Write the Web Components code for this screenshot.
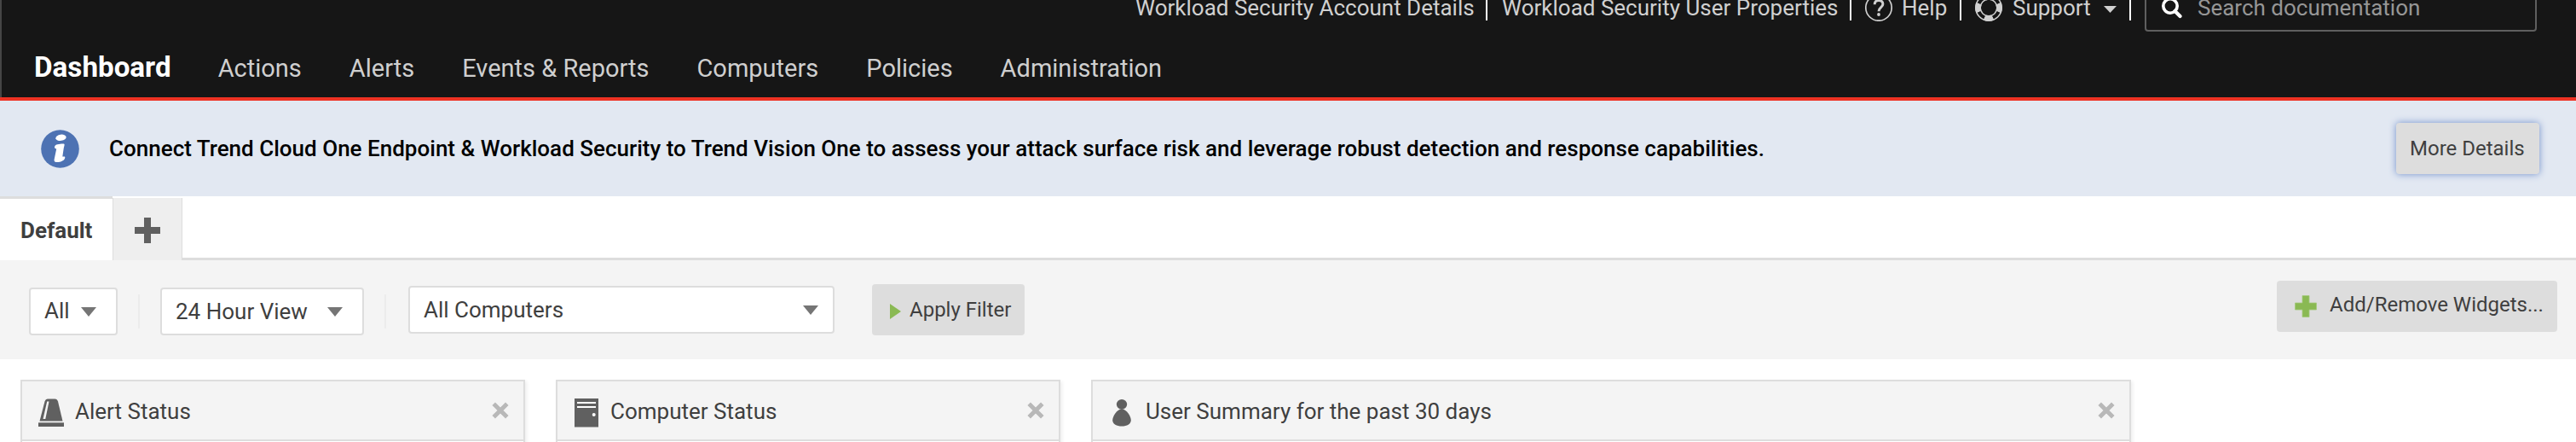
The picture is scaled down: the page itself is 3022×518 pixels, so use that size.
<!DOCTYPE html>
<html lang="en">
<head>
<meta charset="utf-8">
<title>Workload Security</title>
<style>
html, body { margin: 0; }
body { width: 3022px; height: 518px; overflow: hidden; background: #fff; color: #3f3f3f; font-family: Roboto, "Liberation Sans", sans-serif; font-size: 26px; white-space: nowrap; }
</style>
</head>
<body>
<ws-app></ws-app>
<script>
const define = (name, html) => {
  const template = document.createElement('template');
  template.innerHTML = html;
  customElements.define(name, class extends HTMLElement {
    constructor() {
      super();
      this.attachShadow({ mode: 'open' }).append(template.content.cloneNode(true));
    }
  });
};

/* Icons */
const iconMarkup = {
  help: '<svg width="32" height="32" viewBox="0 0 32 32" fill="none" stroke="#d0d0d0"><circle cx="16" cy="16" r="15.2" stroke-width="1.7"/><path d="M11.2 12.2C11.2 9 13 7.6 16 7.6s4.9 1.600 4.900 4.200c0 3.900-4.900 3.700-4.900 8.400" stroke-width="3"/><circle cx="16" cy="24" r="1.900" fill="#d0d0d0" stroke="none"/></svg>',
  support: '<svg width="32" height="32" viewBox="0 0 32 32" fill="none" stroke="#d0d0d0"><circle cx="16" cy="16" r="15.2" stroke-width="1.600"/><circle cx="16" cy="16" r="9.800" stroke-width="1.500"/><path d="M10.600 3.500A13.500 13.500 0 0 1 21.400 3.500M28.500 10.600A13.500 13.500 0 0 1 28.500 21.400M21.400 28.500A13.500 13.500 0 0 1 10.600 28.500M3.500 21.400A13.500 13.500 0 0 1 3.500 10.600" stroke-width="4.500"/><path d="M12 5.800A11 11 0 0 1 20 5.800M26.200 12A11 11 0 0 1 26.200 20M20 26.200A11 11 0 0 1 12 26.200M5.800 20A11 11 0 0 1 5.800 12" stroke-width="3.500"/></svg>',
  search: '<svg width="24" height="26" viewBox="0 0 24 26" fill="none" stroke="#fff"><circle cx="10" cy="11" r="8.200" stroke-width="3.600"/><path d="M15.500 17l6 6" stroke-width="4.200" stroke-linecap="round"/></svg>',
  info: '<svg width="45" height="45" viewBox="0 0 45 45"><circle cx="22.500" cy="22.500" r="22.300" fill="#4d72b3"/><ellipse cx="23.500" cy="9.300" rx="6.200" ry="3.600" transform="rotate(-8 23.500 9.300)" fill="#fff"/><path d="M16 20.500c.4-2.300 1.500-2.800 3.500-3.200 3-.7 7.500-1.200 8-.3.500.8-.5 3-.8 5L25.300 31.500h2.600c1 .4.1 2.800-1 4-2 1.700-5.500 2.700-9 2.600-1.900-.2-2.500-1.200-2.300-3l2.600-12.600c-1.300-.3-2.300-.8-2.200-2z" fill="#fff"/></svg>',
  plus: '<svg width="30" height="30" viewBox="0 0 30 30"><path d="M11 0h8v11h11v8H19v11h-8V19H0v-8h11z" fill="#606060"/></svg>',
  add: '<svg width="26" height="26" viewBox="0 0 26 26"><path d="M9 .5h8V9h8.500v8H17v8.500H9V17H.5V9H9z" fill="#8ab953" stroke="#a3c97c" stroke-width=".8"/></svg>',
  caret: '<svg width="18" height="11" viewBox="0 0 18 11"><path d="M0 0h18L9 11z" fill="#757575"/></svg>',
  caretlight: '<svg width="15" height="8" viewBox="0 0 15 8"><path d="M0 0h15L7.500 8z" fill="#d0d0d0"/></svg>',
  play: '<svg width="13" height="18" viewBox="0 0 13 18"><path d="M0 0l13 9L0 18z" fill="#8ab953"/></svg>',
  close: '<svg width="20" height="20" viewBox="0 0 20 20"><path d="M2.200 2.200l15.600 15.600M17.800 2.200L2.200 17.800" stroke="#b8b8b8" stroke-width="5"/></svg>',
  alert: '<svg width="32" height="34" viewBox="0 0 32 34"><path d="M7.500 3.500Q8.500.5 11 .5h8.500Q22 .5 23 3.500l5.500 23h-27z" fill="#606060"/><path d="M10.200 3.500h2.300L8.300 24H5.500z" fill="#f4f4f4"/><path d="M0 28.300h30V33H0z" fill="#606060"/></svg>',
  computer: '<svg width="28" height="34" viewBox="0 0 28 34"><path d="M0 0h28v33.500H0z" fill="#606060"/><path d="M3 4h22v2H3zM3 9h22v2H3z" fill="#fff"/><circle cx="22.700" cy="19" r="2" fill="#fff"/></svg>',
  user: '<svg width="22" height="32" viewBox="0 0 22 32"><ellipse cx="11" cy="5.800" rx="6.200" ry="5.800" fill="#606060"/><path d="M11 11C17 12 21.800 20 21.800 24.500 21.800 29 17 31.500 11 31.500S.2 29 .2 24.500C.2 20 5 12 11 11z" fill="#606060"/></svg>'
};
customElements.define('ws-icon', class extends HTMLElement {
  constructor() {
    super();
    this.attachShadow({ mode: 'open' });
  }
  connectedCallback() {
    this.shadowRoot.innerHTML = '<style>:host{display:block;flex:none}svg{display:block}</style>' + iconMarkup[this.getAttribute('name')];
  }
});

define('ws-header', `<style>
:host { display: block; box-sizing: border-box; height: 118px; overflow: hidden; background: #161616; border-bottom: 4px solid #ee3223; color: #d0d0d0; box-shadow: inset 2px 0 #454545; }
.top { display: flex; align-items: center; height: 56px; margin: -19px 46px 0 0; justify-content: flex-end; line-height: 32px; }
i { width: 2px; height: 30px; background: #fff; flex: none; }
.account { width: 396px; margin-right: 15px; }
.user { width: 393px; margin: 0 15px 0 17px; }
.help { width: 53px; margin: 0 15px 0 11px; }
.support { width: 92px; margin: 0 15px 0 12px; }
.h { margin-left: 16px; } .s { margin-left: 16px; }
.caret { margin: 3px 15px 0 0; }
.search { box-sizing: border-box; display: flex; align-items: center; width: 460px; height: 56px; margin-left: 16px; padding-left: 18px; border: 2px solid #5f5f5f; border-radius: 4px; color: #969696; }
.search span { margin-left: 18px; }
nav { display: flex; align-items: baseline; gap: 56px; padding: 3px 0 0 40px; height: 74px; line-height: 77px; font-size: 29px; color: #cfcfcf; }
b { font-size: 33.2px; color: #fff; margin-right: -1px; }
</style>
<div class="top">
<span class="account">Workload Security Account Details</span><i></i>
<span class="user">Workload Security User Properties</span><i></i>
<ws-icon class="h" name="help"></ws-icon><span class="help">Help</span><i></i>
<ws-icon class="s" name="support"></ws-icon><span class="support">Support</span><ws-icon class="caret" name="caretlight"></ws-icon><i></i>
<div class="search"><ws-icon name="search"></ws-icon><span>Search documentation</span></div>
</div>
<nav><b>Dashboard</b><span>Actions</span><span>Alerts</span><span>Events &amp; Reports</span><span>Computers</span><span>Policies</span><span>Administration</span></nav>`);

define('ws-button', `<style>
:host { display: flex; box-sizing: border-box; align-items: center; height: 60px; background: #ddd; border-radius: 4px; font-size: 24px; line-height: 30px; color: #3f3f3f; flex: none; }
</style><slot></slot>`);

define('ws-banner', `<style>
:host { display: flex; box-sizing: border-box; height: 112px; align-items: center; padding: 0 43px 0 48px; background: #e2e8f2; color: #000; font-weight: 500; }
.text { margin-left: 35px; flex: 1; line-height: 32px; letter-spacing: .01px; }
ws-button { width: 168px; padding-left: 16px; font-weight: 400; letter-spacing: 0; box-shadow: 0 0 8px #7391cb; }
</style><ws-icon name="info"></ws-icon><span class="text"><slot></slot></span><ws-button>More Details</ws-button>`);

define('ws-tabs', `<style>
:host { display: flex; height: 75px; }
.tab { box-sizing: border-box; width: 132px; border-top: 3px solid #ddd; padding: 22px 0 0 24px; line-height: 30px; font-weight: 700; }
.new { box-sizing: border-box; width: 82px; margin-top: 2px; border: solid #ddd; border-width: 0 1px; background: #eee; display: flex; padding: 23px 0 0 25px; }
.rest { flex: 1; border-bottom: 3px solid #ddd; }
</style><div class="tab">Default</div><div class="new"><ws-icon name="plus"></ws-icon></div><div class="rest"></div>`);

define('ws-select', `<style>
:host { display: flex; box-sizing: border-box; align-items: center; justify-content: space-between; height: 56px; padding: 0 var(--end, 23px) 0 var(--start, 17px); background: #fff; border: 2px solid #ddd; border-radius: 4px; line-height: 32px; flex: none; }
span { margin-top: var(--shift, 0); }
</style><span><slot></slot></span><ws-icon name="caret"></ws-icon>`);

define('ws-filters', `<style>
:host { display: flex; box-sizing: border-box; align-items: flex-start; height: 116px; padding: 28px 22px 0 34px; background: #f4f4f4; }
i { width: 2px; height: 40px; margin-top: 12px; background: #ececec; }
.all { width: 104px; margin: 4px 24px 0 0; --shift: -3px; --start: 16px; }
.hours { width: 239px; margin: 4px 24px 0; --start: 16px; }
.computers { width: 500px; margin: 2px 0 0 26px; --start: 16px; --end: 17px; }
.apply { width: 179px; margin-left: 44px; padding-left: 21px; gap: 10px; }
.apply ws-icon { margin-top: 4px; }
.add { width: 329px; margin: -4px 0 0 auto; padding-left: 21px; gap: 15px; }
.add span { margin-top: -4px; }
</style>
<ws-select class="all">All</ws-select><i></i>
<ws-select class="hours">24 Hour View</ws-select><i></i>
<ws-select class="computers">All Computers</ws-select>
<ws-button class="apply"><ws-icon name="play"></ws-icon><span>Apply Filter</span></ws-button>
<ws-button class="add"><ws-icon name="add"></ws-icon><span>Add/Remove Widgets...</span></ws-button>`);

define('ws-widget', `<style>
:host { display: block; box-sizing: border-box; height: 90px; border: 2px solid #ddd; background: #fff; box-shadow: 2px 2px 4px rgba(0,0,0,.07); flex: none; }
.head { display: flex; align-items: center; height: 68px; background: #f4f4f4; border-bottom: 2px solid #ddd; padding: 0 17px 0 0; }
.icon { width: 62px; display: flex; box-sizing: border-box; padding: 5px 0 0 var(--inset, 19px); }
.title { flex: 1; line-height: 32px; padding-top: 1px; }
</style>
<div class="head"><span class="icon"><slot name="icon"></slot></span><span class="title"><slot></slot></span><ws-icon name="close"></ws-icon></div>`);

define('ws-app', `<style>
:host { display: block; width: 3022px; height: 518px; overflow: hidden; }
.widgets { display: flex; gap: 36px; padding: 24px 24px 0; }
</style>
<ws-header></ws-header>
<ws-banner>Connect Trend Cloud One Endpoint &amp; Workload Security to Trend Vision One to assess your attack surface risk and leverage robust detection and response capabilities.</ws-banner>
<ws-tabs></ws-tabs>
<ws-filters></ws-filters>
<div class="widgets">
<ws-widget style="width:592px"><ws-icon slot="icon" name="alert"></ws-icon>Alert Status</ws-widget>
<ws-widget style="width:592px;--inset:20px"><ws-icon slot="icon" name="computer"></ws-icon>Computer Status</ws-widget>
<ws-widget style="width:1220px;--inset:23px"><ws-icon slot="icon" name="user"></ws-icon>User Summary for the past 30 days</ws-widget>
</div>`);
</script>
</body>
</html>
